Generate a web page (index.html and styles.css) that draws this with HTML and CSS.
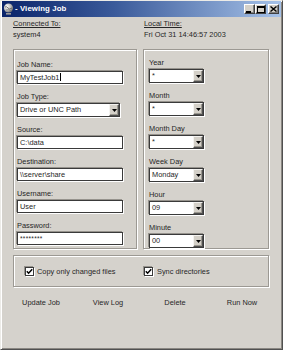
FILE: index.html
```html
<!DOCTYPE html>
<html>
<head>
<meta charset="utf-8">
<title>Viewing Job</title>
<link rel="stylesheet" href="styles.css">
</head>
<body>
<div class="window">
  <div class="titlebar">
    <svg class="app-icon" width="11" height="12" viewBox="0 0 11 12">
      <defs>
        <radialGradient id="g" cx="35%" cy="35%" r="70%">
          <stop offset="0" stop-color="#ffffff"/>
          <stop offset="0.6" stop-color="#b8b8b8"/>
          <stop offset="1" stop-color="#6a6a6a"/>
        </radialGradient>
      </defs>
      <circle cx="5.5" cy="5" r="4.6" fill="url(#g)"/>
      <path d="M2 4 Q4 3 5 5 T9 5" stroke="#5a5a5a" stroke-width="0.8" fill="none"/>
      <path d="M3 7 Q5 6 8 7.5" stroke="#7a7a7a" stroke-width="0.7" fill="none"/>
      <rect x="3" y="10" width="5" height="1.6" fill="#9a9a9a"/>
    </svg>
    <span class="title">- Viewing Job</span>
    <div class="title-buttons">
      <span class="tbtn">
        <svg width="7" height="7" viewBox="0 0 7 7"><rect x="0" y="5" width="5" height="2" fill="#000"/></svg>
      </span>
      <span class="tbtn">
        <svg width="8" height="7" viewBox="0 0 8 7"><rect x="0.5" y="0.5" width="7" height="6" fill="none" stroke="#000"/><rect x="0" y="0" width="8" height="2" fill="#000"/></svg>
      </span>
      <span class="tbtn close">
        <svg width="7" height="6" viewBox="0 0 7 6"><path d="M0.5 0.5 L6.5 5.5 M6.5 0.5 L0.5 5.5" stroke="#000" stroke-width="1.4"/></svg>
      </span>
    </div>
  </div>

  <div class="content">
    <div class="header">
      <div class="info">
        <div class="info-label">Connected To:</div>
        <div class="info-value">system4</div>
      </div>
      <div class="info">
        <div class="info-label">Local Time:</div>
        <div class="info-value">Fri Oct 31 14:46:57 2003</div>
      </div>
    </div>

    <div class="columns">
      <div class="group group-left">
        <div class="field">
          <div class="label">Job Name:</div>
          <div class="textbox">MyTestJob1<span class="caret"></span></div>
        </div>
        <div class="field">
          <div class="label">Job Type:</div>
          <div class="select select-wide"><span class="value">Drive or UNC Path</span><span class="arrow"><svg width="5" height="3" viewBox="0 0 5 3"><path d="M0 0 H5 L2.5 3 Z" fill="#000"/></svg></span></div>
        </div>
        <div class="field">
          <div class="label">Source:</div>
          <div class="textbox">C:\data</div>
        </div>
        <div class="field">
          <div class="label">Destination:</div>
          <div class="textbox">\\server\share</div>
        </div>
        <div class="field">
          <div class="label">Username:</div>
          <div class="textbox">User</div>
        </div>
        <div class="field">
          <div class="label">Password:</div>
          <div class="textbox"><span class="mask">********</span></div>
        </div>
      </div>

      <div class="group group-right">
        <div class="field">
          <div class="label">Year</div>
          <div class="select select-small"><span class="value">*</span><span class="arrow"><svg width="5" height="3" viewBox="0 0 5 3"><path d="M0 0 H5 L2.5 3 Z" fill="#000"/></svg></span></div>
        </div>
        <div class="field">
          <div class="label">Month</div>
          <div class="select select-small"><span class="value">*</span><span class="arrow"><svg width="5" height="3" viewBox="0 0 5 3"><path d="M0 0 H5 L2.5 3 Z" fill="#000"/></svg></span></div>
        </div>
        <div class="field">
          <div class="label">Month Day</div>
          <div class="select select-small"><span class="value">*</span><span class="arrow"><svg width="5" height="3" viewBox="0 0 5 3"><path d="M0 0 H5 L2.5 3 Z" fill="#000"/></svg></span></div>
        </div>
        <div class="field">
          <div class="label">Week Day</div>
          <div class="select select-small"><span class="value">Monday</span><span class="arrow"><svg width="5" height="3" viewBox="0 0 5 3"><path d="M0 0 H5 L2.5 3 Z" fill="#000"/></svg></span></div>
        </div>
        <div class="field">
          <div class="label">Hour</div>
          <div class="select select-small"><span class="value">09</span><span class="arrow"><svg width="5" height="3" viewBox="0 0 5 3"><path d="M0 0 H5 L2.5 3 Z" fill="#000"/></svg></span></div>
        </div>
        <div class="field">
          <div class="label">Minute</div>
          <div class="select select-small"><span class="value">00</span><span class="arrow"><svg width="5" height="3" viewBox="0 0 5 3"><path d="M0 0 H5 L2.5 3 Z" fill="#000"/></svg></span></div>
        </div>
      </div>
    </div>

    <div class="group options">
      <div class="check">
        <span class="checkbox"><svg width="7" height="7" viewBox="0 0 7 7"><path d="M0.8 3.2 L2.6 5.2 L6.2 1.2" stroke="#000" stroke-width="1.5" fill="none"/></svg></span>
        <span>Copy only changed files</span>
      </div>
      <div class="check">
        <span class="checkbox"><svg width="7" height="7" viewBox="0 0 7 7"><path d="M0.8 3.2 L2.6 5.2 L6.2 1.2" stroke="#000" stroke-width="1.5" fill="none"/></svg></span>
        <span>Sync directories</span>
      </div>
    </div>

    <div class="actions">
      <span class="action">Update Job</span>
      <span class="action">View Log</span>
      <span class="action">Delete</span>
      <span class="action">Run Now</span>
    </div>
  </div>
</div>
</body>
</html>
```

FILE: styles.css
```css
html, body {
  margin: 0;
  padding: 0;
  background: #d5d2cc;
}

body {
  font-family: "Liberation Sans", Arial, sans-serif;
  font-size: 7.4px;
  color: #262626;
}

.window {
  width: 283px;
  height: 350px;
  box-sizing: border-box;
  background: #d5d2cc;
  border: 1px solid;
  border-color: #ecebe7 #505050 #505050 #ecebe7;
  box-shadow: inset 1px 1px #ffffff, inset -1px -1px #8a8782;
  padding: 0 1px 1px;
}

.titlebar {
  height: 16px;
  display: flex;
  align-items: center;
  background: linear-gradient(90deg, #0a246a 0%, #3a5a9a 40%, #a6c2e8 100%);
  color: #fff;
  padding-left: 1px;
}

.app-icon {
  display: block;
  flex: none;
  margin-right: 1px;
}

.title {
  font-weight: bold;
  font-size: 7.8px;
  letter-spacing: 0.1px;
  line-height: 16px;
}

.title-buttons {
  margin-left: auto;
  display: flex;
  align-items: center;
  margin-right: 2px;
}

.tbtn {
  width: 11px;
  height: 10px;
  box-sizing: border-box;
  background: #d4d0c8;
  border: 1px solid;
  border-color: #ffffff #404040 #404040 #ffffff;
  box-shadow: inset -1px -1px #808080;
  display: flex;
  align-items: center;
  justify-content: center;
}

.tbtn svg {
  display: block;
}

.tbtn.close {
  margin-left: 2px;
}

.content {
  padding: 2px 0 0 11px;
}

.header,
.columns {
  display: grid;
  grid-template-columns: 124px 126px;
  column-gap: 6px;
}

.info {
  line-height: 10px;
}

.info-label {
  text-decoration: underline;
}

.info-value {
  margin-top: 1px;
}

.info + .info {
  padding-left: 1px;
}

.columns {
  margin-top: 9px;
}

.group {
  border: 1px solid #9c9993;
  box-shadow: inset 1px 1px #ffffff, 1px 1px #ffffff;
}

.group-left {
  padding: 10px 0 3px 3px;
}

.group-right {
  padding: 8px 0 0 5px;
}

.field + .field {
  margin-top: 8px;
}

.label {
  line-height: 10px;
  margin-bottom: 1px;
  white-space: nowrap;
}

.textbox {
  width: 106px;
  height: 13px;
  box-sizing: border-box;
  background: #ffffff;
  border: 1px solid #3a3a3a;
  box-shadow: -1px -1px #96938d, 1px 1px #ffffff;
  padding: 0 2px;
  line-height: 11px;
  white-space: nowrap;
  overflow: hidden;
}

.caret {
  display: inline-block;
  width: 1px;
  height: 8px;
  background: #000;
  vertical-align: -1px;
  margin-left: 1px;
}

.mask {
  font-size: 6.5px;
  letter-spacing: 0.3px;
}

.select {
  height: 14px;
  box-sizing: border-box;
  display: flex;
  background: #ffffff;
  border: 1px solid #3a3a3a;
  box-shadow: -1px -1px #96938d, 1px 1px #ffffff;
}

.select-wide {
  width: 103px;
}

.select-small {
  width: 55px;
}

.select .value {
  flex: 1;
  padding-left: 2px;
  line-height: 12px;
  white-space: nowrap;
  overflow: hidden;
}

.select .arrow {
  width: 10px;
  box-sizing: border-box;
  background: #d4d0c8;
  border: 1px solid;
  border-color: #f4f3f0 #505050 #505050 #f4f3f0;
  box-shadow: inset -1px -1px #9a978f;
  display: flex;
  align-items: center;
  justify-content: center;
}

.select .arrow svg {
  display: block;
}

.options {
  width: 256px;
  height: 32px;
  box-sizing: border-box;
  margin-top: 6px;
  display: grid;
  grid-template-columns: 119px 1fr;
  align-items: center;
  padding-left: 11px;
}

.check {
  display: flex;
  align-items: center;
  white-space: nowrap;
}

.checkbox {
  width: 9px;
  height: 9px;
  box-sizing: border-box;
  background: #ffffff;
  border: 1px solid #3a3a3a;
  box-shadow: -1px -1px #96938d, 1px 1px #ffffff;
  display: flex;
  align-items: center;
  justify-content: center;
  margin-right: 3px;
}

.check + .check .checkbox {
  margin-right: 4px;
}

.checkbox svg {
  display: block;
}

.actions {
  margin-top: 2px;
  height: 26px;
  display: grid;
  grid-template-columns: repeat(4, 56px);
  column-gap: 11px;
  align-items: center;
}

.action {
  text-align: center;
  white-space: nowrap;
}
```
